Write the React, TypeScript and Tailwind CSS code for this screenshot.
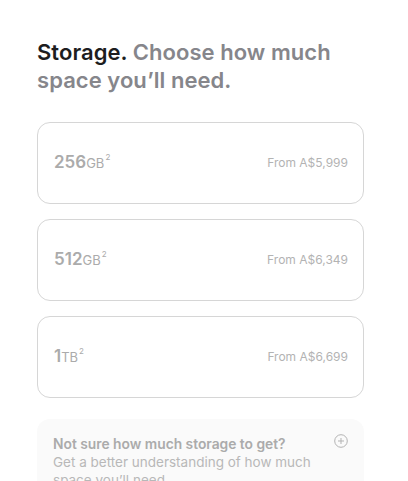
import React from "react";

const options = [
  { num: "256", unit: "GB", price: "From A$5,999" },
  { num: "512", unit: "GB", price: "From A$6,349" },
  { num: "1", unit: "TB", price: "From A$6,699" },
];

export default function App() {
  return (
    <div
      className="w-[408px] h-[481px] overflow-hidden bg-white pl-[37px] pt-[38px]"
      style={{ fontFamily: 'Inter, "Liberation Sans", Arial, sans-serif' }}
    >
      <div className="w-[327px]">
        <h2 className="text-[22px] leading-[28px] font-semibold tracking-[0.05px] text-[#86868b]">
          <span className="text-[#1d1d1f]">Storage.</span> Choose how much space you’ll need.
        </h2>
        <div className="mt-[28px] flex flex-col gap-[15px]">
          {options.map((o) => (
            <div
              key={o.num}
              className="h-[82px] rounded-[13px] border border-[#d6d6d6] flex items-center justify-between pl-[16px] pr-[15px]"
            >
              <div className="flex items-baseline text-[#ababab]">
                <span className="text-[17px] font-semibold">{o.num}</span>
                <span className="text-[13px]">{o.unit}</span>
                <span className="text-[8px] self-start mt-[1px] ml-[1px]">2</span>
              </div>
              <span className="text-[12px] text-[#b3b3b3]">{o.price}</span>
            </div>
          ))}
        </div>
        <div className="mt-[21px] rounded-[13px] bg-[#fafafa] pl-[16px] pr-[16px] pt-[16px] pb-[16px] relative">
          <div className="text-[13.8px] leading-[18px] font-semibold text-[#ababab] pr-[30px]">
            Not sure how much storage to get?
          </div>
          <div className="text-[13.5px] leading-[18px] text-[#b8b8b8] pr-[8px]">
            Get a better understanding of how much space you’ll need.
          </div>
          <svg
            className="absolute right-[16px] top-[15px]"
            width="14"
            height="14"
            viewBox="0 0 14 14"
            fill="none"
            stroke="#b3b3b3"
            strokeWidth="1"
          >
            <circle cx="7" cy="7" r="6.3" />
            <path d="M7 4v6M4 7h6" />
          </svg>
        </div>
      </div>
    </div>
  );
}
